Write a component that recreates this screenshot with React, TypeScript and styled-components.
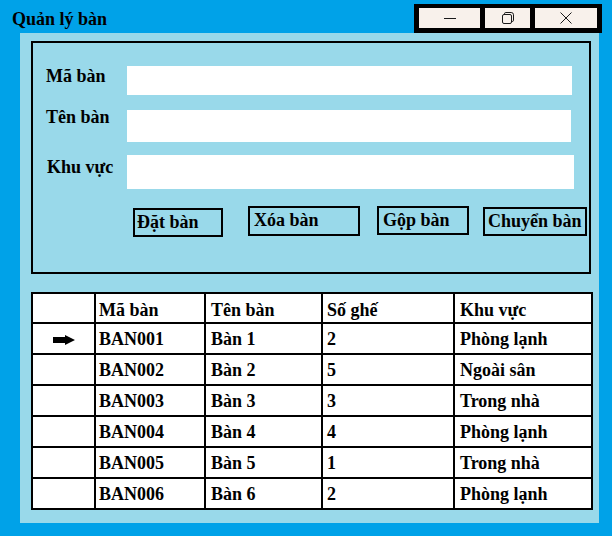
import React from "react";
import styled, { createGlobalStyle } from "styled-components";

const GlobalStyle = createGlobalStyle`
  html, body {
    margin: 0;
    padding: 0;
  }

  body {
    background: #00a2e8;
    font-family: "Liberation Serif", "Times New Roman", serif;
    color: #000;
  }
`

const Window = styled.div`
  width: 612px;
  height: 536px;
  background: #00a2e8;
  display: flex;
  flex-direction: column;
  overflow: hidden;
`

const TitleBar = styled.div`
  height: 33px;
  display: flex;
  justify-content: space-between;
  align-items: flex-start;
  padding-left: 12px;
`

const Title = styled.div`
  margin-top: 9px;
  font-size: 18px;
  line-height: 20px;
  font-weight: bold;
`

const CaptionFrame = styled.div`
  margin: 4px 10px 0 0;
  padding: 4px 5px 5px 5px;
  background: #000;
  display: flex;
  gap: 5px;
`

const CaptionButton = styled.div<{ $width: number }>`
  width: ${p => p.$width}px;
  height: 20px;
  background: #f8f1eb;
  display: flex;
  align-items: center;
  justify-content: center;
`

const Panel = styled.div`
  margin-left: 20px;
  width: 579px;
  height: 490px;
  background: #99d9ea;
  box-sizing: border-box;
  padding: 8px 0 0 11px;
`

const GroupBox = styled.div`
  width: 560px;
  height: 233px;
  box-sizing: border-box;
  border: 2px solid #000;
  padding: 23px 0 0 13px;
  display: flex;
  flex-direction: column;
`

const FieldRow = styled.div<{ $gap: number }>`
  display: flex;
  align-items: flex-start;
  margin-top: ${p => p.$gap}px;
`

const Label = styled.div<{ $nudge: number }>`
  width: 81px;
  margin-top: ${p => p.$nudge}px;
  padding-left: ${p => (p.$nudge > 0 ? 1 : 0)}px;
  box-sizing: border-box;
  font-size: 18px;
  line-height: 20px;
  font-weight: bold;
`

const Input = styled.div<{ $width: number; $height: number }>`
  width: ${p => p.$width}px;
  height: ${p => p.$height}px;
  background: #fff;
`

const ButtonRow = styled.div`
  display: flex;
  align-items: flex-start;
  margin-top: 17px;
  padding-left: 87px;
`

const ActionButton = styled.div<{ $left: number; $top: number; $width: number; $height: number; $pad: number }>`
  margin-left: ${p => p.$left}px;
  margin-top: ${p => p.$top}px;
  width: ${p => p.$width}px;
  height: ${p => p.$height}px;
  box-sizing: border-box;
  border: 2px solid #000;
  padding: 2px 0 0 ${p => p.$pad}px;
  font-size: 18px;
  line-height: 20px;
  font-weight: bold;
  white-space: nowrap;
`

const Grid = styled.table`
  margin-top: 18px;
  width: 560px;
  border-collapse: collapse;
  table-layout: fixed;
  background: #fff;
  border: 2px solid #000;
`

const Col = styled.col<{ $width: number }>`
  width: ${p => p.$width}px;
`

const Row = styled.tr<{ $height: number }>`
  height: ${p => p.$height}px;
`

const Cell = styled.td<{ $pad: number }>`
  border: 2px solid #000;
  padding: 5px 0 0 ${p => p.$pad}px;
  vertical-align: top;
  font-size: 18px;
  line-height: 20px;
  font-weight: bold;
  white-space: nowrap;
`

const HeadCell = styled(Cell)`
  padding-top: 6px;
`

const Pointer = styled.svg`
  display: block;
  margin: 6px auto 0 auto;
`

const columns = [
  { width: 63, pad: 0, title: "" },
  { width: 110, pad: 3, title: "Mã bàn" },
  { width: 117, pad: 5, title: "Tên bàn" },
  { width: 132, pad: 4, title: "Số ghế" },
  { width: 138, pad: 5, title: "Khu vực" },
]

const rows = [
  ["BAN001", "Bàn 1", "2", "Phòng lạnh"],
  ["BAN002", "Bàn 2", "5", "Ngoài sân"],
  ["BAN003", "Bàn 3", "3", "Trong nhà"],
  ["BAN004", "Bàn 4", "4", "Phòng lạnh"],
  ["BAN005", "Bàn 5", "1", "Trong nhà"],
  ["BAN006", "Bàn 6", "2", "Phòng lạnh"],
]

const fields = [
  { label: "Mã bàn", gap: 0, nudge: 0, width: 445, height: 29 },
  { label: "Tên bàn", gap: 15, nudge: -3, width: 444, height: 32 },
  { label: "Khu vực", gap: 13, nudge: 2, width: 447, height: 34 },
]

const actions = [
  { text: "Đặt bàn", left: 0, top: 2, width: 90, height: 29, pad: 2 },
  { text: "Xóa bàn", left: 25, top: 0, width: 112, height: 30, pad: 4 },
  { text: "Gộp bàn", left: 17, top: 0, width: 92, height: 29, pad: 4 },
  { text: "Chuyển bàn", left: 14, top: 1, width: 104, height: 29, pad: 3 },
]

export default function App() {
  return (
    <>
      <GlobalStyle />
      <Window>
        <TitleBar>
          <Title>Quản lý bàn</Title>
          <CaptionFrame>
            <CaptionButton $width={61}>
              <svg width="12" height="12" viewBox="0 0 12 12">
                <path d="M0 6.5h12" stroke="#1a1a1a" strokeWidth="1" />
              </svg>
            </CaptionButton>
            <CaptionButton $width={45}>
              <svg width="12" height="12" viewBox="0 0 12 12" fill="none" stroke="#1a1a1a" strokeWidth="1">
                <rect x="0.5" y="2.5" width="9" height="9" rx="1.5" />
                <path d="M2.5 2.5V1.8a1.3 1.3 0 0 1 1.3-1.3h5.4a2.3 2.3 0 0 1 2.3 2.3v5.4a1.3 1.3 0 0 1-1.3 1.3H9.5" />
              </svg>
            </CaptionButton>
            <CaptionButton $width={62}>
              <svg width="12" height="12" viewBox="0 0 12 12">
                <path d="M0.5 0.5l11 11M11.5 0.5l-11 11" stroke="#1a1a1a" strokeWidth="1" />
              </svg>
            </CaptionButton>
          </CaptionFrame>
        </TitleBar>
        <Panel>
          <GroupBox>
            {fields.map(f => (
              <FieldRow key={f.label} $gap={f.gap}>
                <Label $nudge={f.nudge}>{f.label}</Label>
                <Input $width={f.width} $height={f.height} />
              </FieldRow>
            ))}
            <ButtonRow>
              {actions.map(a => (
                <ActionButton
                  key={a.text}
                  $left={a.left}
                  $top={a.top}
                  $width={a.width}
                  $height={a.height}
                  $pad={a.pad}
                >
                  {a.text}
                </ActionButton>
              ))}
            </ButtonRow>
          </GroupBox>
          <Grid>
            <colgroup>
              {columns.map((c, i) => (
                <Col key={i} $width={c.width} />
              ))}
            </colgroup>
            <tbody>
              <Row $height={30}>
                {columns.map((c, i) => (
                  <HeadCell key={i} $pad={c.pad}>{c.title}</HeadCell>
                ))}
              </Row>
              {rows.map((r, ri) => (
                <Row key={r[0]} $height={31}>
                  <Cell $pad={0}>
                    {ri === 0 && (
                      <Pointer width="22" height="10" viewBox="0 0 22 10">
                        <path d="M0 2h12V0l10 5-10 5V8H0z" fill="#000" />
                      </Pointer>
                    )}
                  </Cell>
                  {r.map((v, ci) => (
                    <Cell key={ci} $pad={columns[ci + 1].pad}>{v}</Cell>
                  ))}
                </Row>
              ))}
            </tbody>
          </Grid>
        </Panel>
      </Window>
    </>
  )
}
